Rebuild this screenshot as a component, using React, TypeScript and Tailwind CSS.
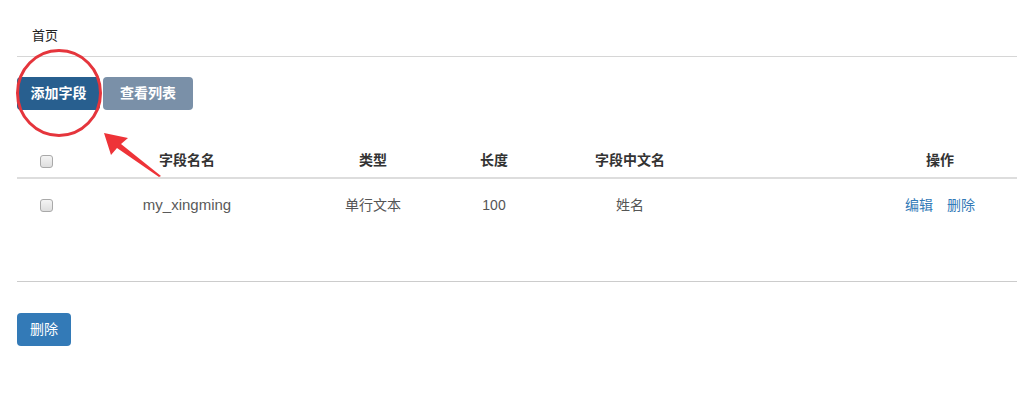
import React from 'react';

const cols = 'grid grid-cols-[58px_224px_148px_94px_178px_144px_154px]';

function Box() {
  return <span className="block h-[13px] w-[13px] rounded-[3px] border border-[#a9a9a9] bg-gradient-to-b from-[#f4f4f4] to-[#dedede]" />;
}

export default function App() {
  return (
    <div className="relative h-[413px] w-[1017px] bg-white font-['Liberation_Sans','Noto_Sans_CJK_SC',sans-serif] text-[14px] text-[#333]">
      <div className="ml-[17px]">
        <div className="flex h-[57px] items-end border-b border-[#d6d6d6] pb-[11px] pl-[15px] text-[13px] text-[#222]">首页</div>

        <div className="mt-[20px] flex gap-[3px]">
          <button className="h-[33px] w-[83px] rounded-[4px] bg-[#285f8f] font-bold text-white">添加字段</button>
          <button className="h-[33px] w-[90px] rounded-[4px] bg-[#7a90a8] font-bold text-white">查看列表</button>
        </div>

        <div className="mt-[33px]">
          <div className={`${cols} h-[36px] items-center border-b-2 border-[#dddddd] font-bold`}>
            <div className="flex justify-center pt-[2px]"><Box /></div>
            <div className="text-center">字段名名</div>
            <div className="text-center">类型</div>
            <div className="text-center">长度</div>
            <div className="text-center">字段中文名</div>
            <div />
            <div className="text-center">操作</div>
          </div>
          <div className={`${cols} h-[52px] items-center text-[#555]`}>
            <div className="flex justify-center"><Box /></div>
            <div className="text-center text-[15px] text-[#5a5a5a]">my_xingming</div>
            <div className="text-center">单行文本</div>
            <div className="text-center">100</div>
            <div className="text-center">姓名</div>
            <div />
            <div className="flex justify-center gap-[14px] text-[#337ab7]">
              <span>编辑</span>
              <span>删除</span>
            </div>
          </div>
        </div>

        <div className="mt-[50px] border-t border-[#cccccc]" />

        <button className="mt-[31px] h-[33px] w-[54px] rounded-[4px] bg-[#337ab7] text-white">删除</button>
      </div>

      <svg className="pointer-events-none absolute left-0 top-0" width="1017" height="413">
        <ellipse cx="59" cy="93" rx="41.5" ry="42.5" fill="none" stroke="#e5353c" strokeWidth="3" />
        <polygon points="104,133 128,138 121,144 161,176 159,177 117,148 111,155" fill="#ee3338" />
      </svg>
    </div>
  );
}
